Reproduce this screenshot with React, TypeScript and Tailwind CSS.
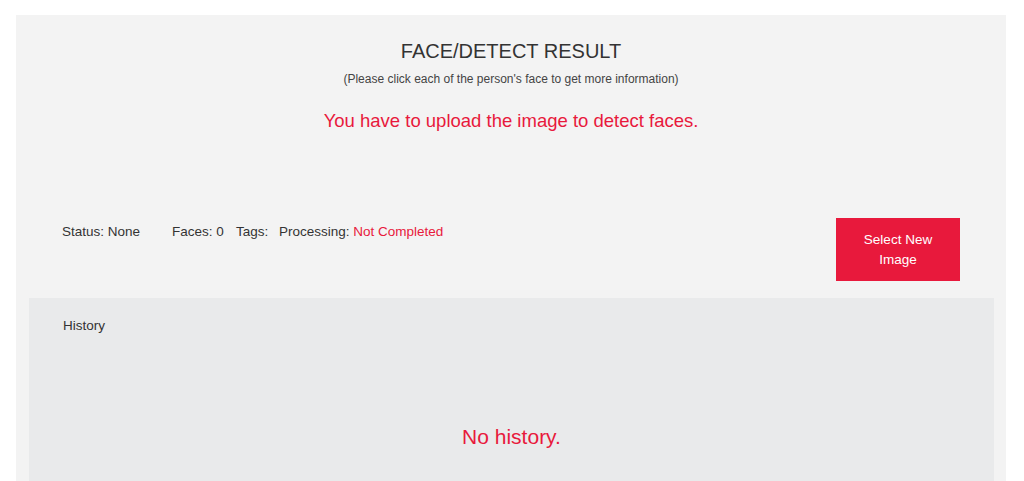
export default function App() {
  return (
    <div className="h-[481px] overflow-hidden bg-white pl-[16px] pr-[18px] pt-[15px] font-['Liberation_Sans',Arial,sans-serif]">
      <div className="h-full bg-[#f3f3f3]">
        {/* header */}
        <div className="flex flex-col items-center pt-[25px] text-center">
          <h1 className="text-[20px] leading-[23px] text-[#333]">FACE/DETECT RESULT</h1>
          <p className="mt-[9px] text-[12px] leading-[14px] text-[#444]">
            (Please click each of the person's face to get more information)
          </p>
          <p className="mt-[24px] text-[18.5px] leading-[22px] text-[#e8193c]">
            You have to upload the image to detect faces.
          </p>
        </div>

        {/* status row */}
        <div className="mt-[86px] flex items-start justify-between px-[46px]">
          <div className="mt-[6px] flex text-[13.5px] leading-[15px] text-[#333]">
            <span className="w-[110px]">Status: None</span>
            <span className="w-[64px]">Faces: 0</span>
            <span className="w-[43px]">Tags:</span>
            <span>
              Processing: <span className="text-[#e8193c]">Not Completed</span>
            </span>
          </div>
          <button className="flex h-[63px] w-[124px] items-center justify-center bg-[#e8193c] px-3 text-[13.5px] leading-[20px] text-white">
            Select New
            <br />
            Image
          </button>
        </div>

        {/* history */}
        <div className="ml-[13px] mr-[12px] mt-[17px] h-[200px] bg-[#e9eaeb] pl-[34px] pt-[20px]">
          <div className="text-[13.5px] leading-[15px] text-[#333]">History</div>
          <div className="mt-[92px] pr-[34px] text-center text-[21px] leading-[24px] text-[#e8193c]">
            No history.
          </div>
        </div>
      </div>
    </div>
  );
}
